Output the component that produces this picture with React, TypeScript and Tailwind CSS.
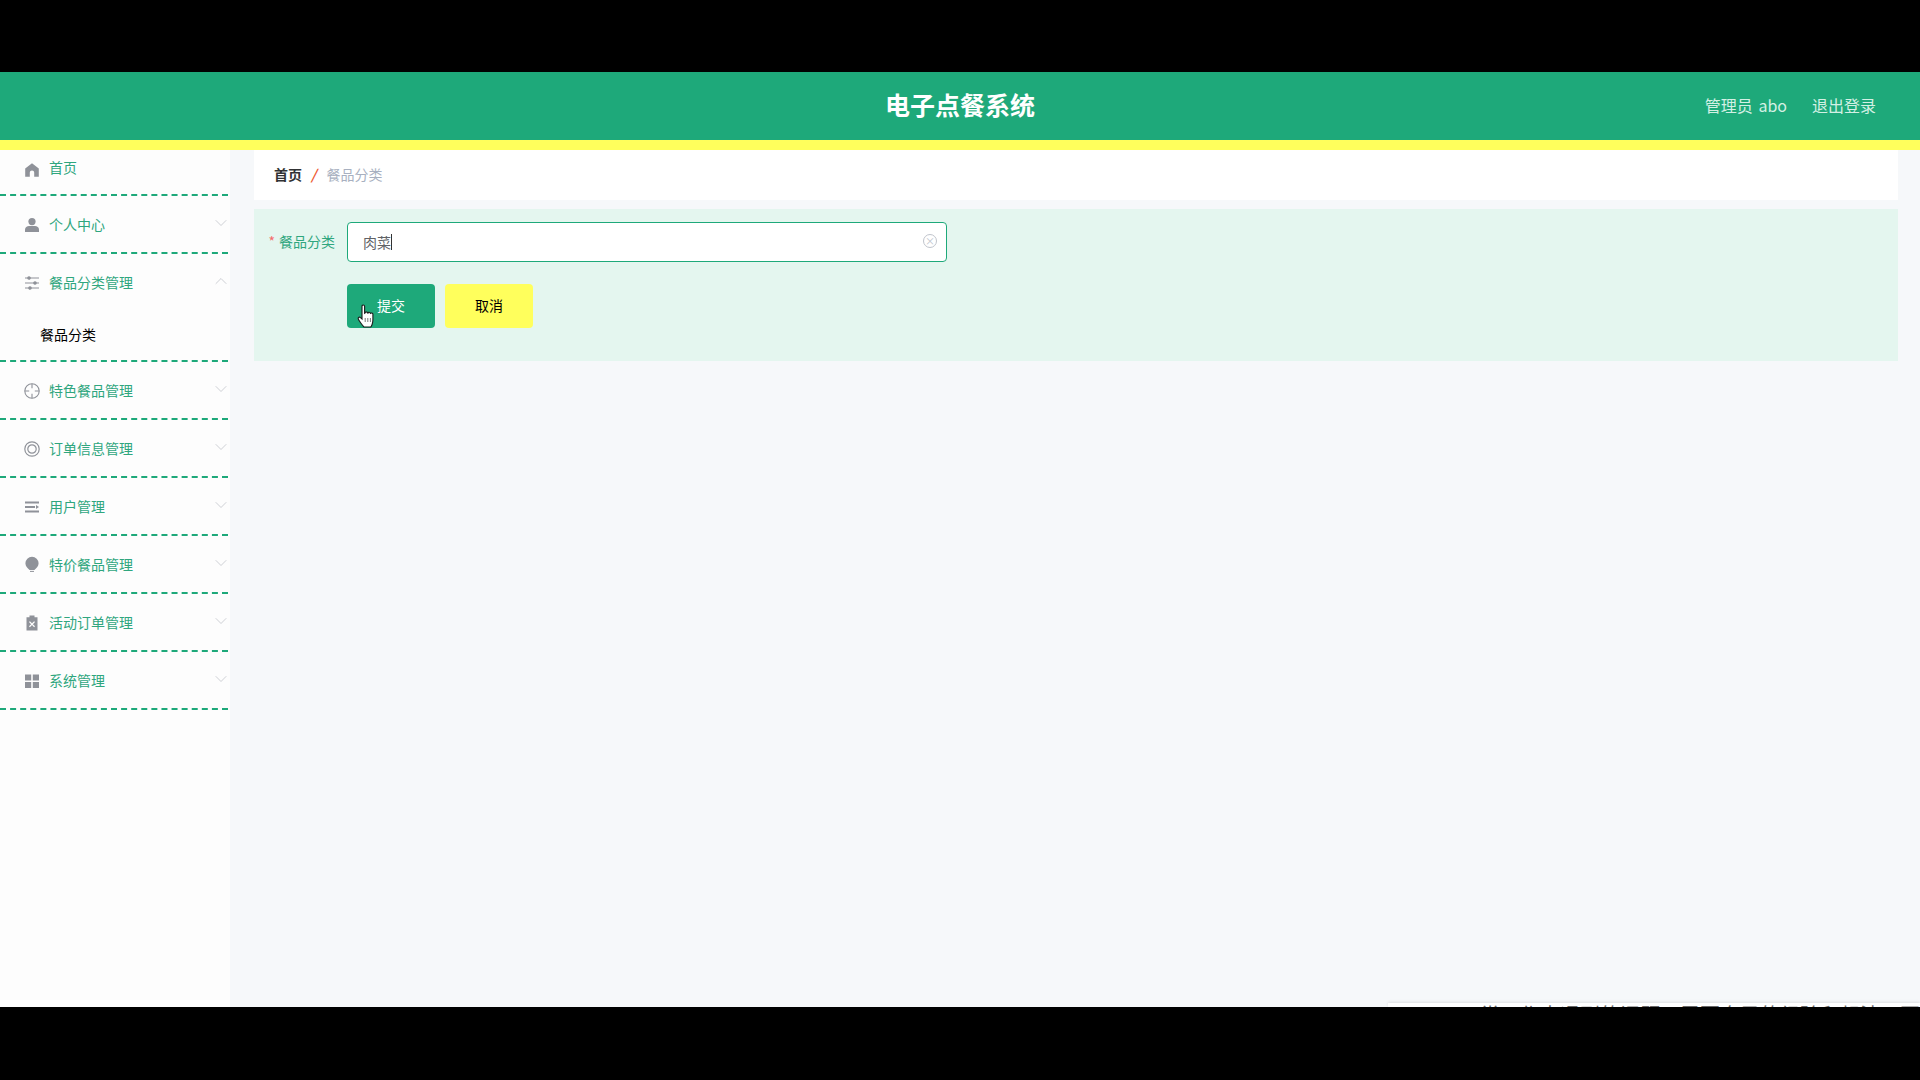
import React from 'react';
import { ChevronDown, ChevronUp } from 'lucide-react';

const FONT = "font-['Microsoft_YaHei','Noto_Sans_CJK_SC','Noto_Sans',sans-serif]";

const HomeIcon = () => (
  <svg viewBox="0 0 16 16" className="w-4 h-4 mt-[6px]" fill="#8f9299">
    <path d="M8 1.2 1.2 6.6v8.2h4.600v-4.200a2.200 2.200 0 0 1 4.400 0v4.200h4.600V6.600z" />
  </svg>
);
const UserIcon = () => (
  <svg viewBox="0 0 16 16" className="w-4 h-4 mt-px" fill="#8f9299">
    <circle cx="8" cy="4.600" r="3.600" />
    <path d="M1 15v-2.400C1 10.200 3 9 5 9h6c2 0 4 1.200 4 3.600V15z" />
  </svg>
);
const SlidersIcon = () => (
  <svg viewBox="0 0 16 16" className="w-4 h-4 mt-px" stroke="#8f9299" strokeWidth="1.2" fill="#8f9299">
    <path d="M1 3h14M1 8h14M1 13h14" />
    <circle cx="5" cy="3" r="1.200" />
    <circle cx="11" cy="8" r="1.200" />
    <circle cx="6" cy="13" r="1.200" />
  </svg>
);
const AimIcon = () => (
  <svg viewBox="0 0 16 16" className="w-4 h-4 mt-px" stroke="#8f9299" strokeWidth="1.100" fill="none">
    <circle cx="8" cy="8" r="7.200" />
    <path d="M8 .8v4.400M8 10.800v4.400M.8 8h4.400M10.800 8h4.400" />
  </svg>
);
const RingIcon = () => (
  <svg viewBox="0 0 16 16" className="w-4 h-4 mt-px" stroke="#8f9299" strokeWidth="1.200" fill="none">
    <circle cx="8" cy="8" r="7.200" />
    <circle cx="8" cy="8" r="4.200" />
  </svg>
);
const FoldIcon = () => (
  <svg viewBox="0 0 16 16" className="w-4 h-4 mt-px" fill="#8f9299">
    <path d="M1 2.400h14v2H1zM1 7h10v2H1zM1 11.600h14v2H1z" />
    <path d="M12 6l3 2-3 2z" />
  </svg>
);
const BulbIcon = () => (
  <svg viewBox="0 0 16 16" className="w-4 h-[17px] mt-px" fill="#8f9299">
    <path d="M8 .2a6.600 6.600 0 0 1 6.600 6.600c0 3-2 5-4.200 6.600H5.600C3.400 11.800 1.400 9.800 1.400 6.800A6.600 6.600 0 0 1 8 .2z" />
    <path d="M6 14.400h4v1H6z" />
  </svg>
);
const ClipboardIcon = () => (
  <svg viewBox="0 0 16 16" className="w-4 h-4 mt-px" fill="#8f9299">
    <path d="M5.500.6h5v1.600h3v13.400h-11V2.200h3zM5.900 6.200l-.9.9L7.100 9.200 5 11.300l.9.9L8 10.100l2.100 2.100.9-.9-2.100-2.100L11 7.100l-.9-.9L8 8.300z" fillRule="evenodd" />
  </svg>
);
const GridIcon = () => (
  <svg viewBox="0 0 16 16" className="w-4 h-4 mt-px" fill="#8f9299">
    <path d="M1 1.400h6.200v6H1zM8.800 1.400H15v6H8.800zM1 9h6.200v6H1zM8.800 9H15v6H8.800z" />
  </svg>
);

const HandCursor = () => (
  <svg viewBox="0 0 18 24" className="w-[18px] h-6">
    <path
      d="M5 2.200c0-1.600 2.600-1.600 2.600 0v7l.5-.3c0-1.400 2.300-1.400 2.400 0l.4.2c.2-1.300 2.300-1.200 2.400.2l.3.2c.4-.9 2.200-.7 2.300.6v6c0 3-1.400 6.400-2.200 6.900H7c-1-.8-5.600-7-5.800-8.400-.2-1.300 1.400-2 2.300-1L5 15z"
      fill="#fff"
      stroke="#1b1b1b"
      strokeWidth="1.100"
    />
    <path d="M8.200 14v4M10.800 14v4M13.400 14v4" stroke="#555" strokeWidth=".8" />
  </svg>
);

const MenuRow = ({ icon, label, open, first }: { icon: React.ReactNode; label: string; open?: boolean; first?: boolean }) => (
  <div className={`relative flex items-center ${first ? 'h-[44px] pb-[11px]' : 'h-[56px]'} pl-6 text-sm text-[#2fa67e]`}>
    <span className="w-4 h-4 flex items-center justify-center mr-[9px]">{icon}</span>
    <span>{label}</span>
    {!first && (
      <span className="absolute -right-[3px] top-[17px] text-[#c4c7cd]">
        {open ? <ChevronUp className="w-5 h-5" strokeWidth={1} /> : <ChevronDown className="w-5 h-5" strokeWidth={1} />}
      </span>
    )}
  </div>
);

const Group = ({ children }: { children: React.ReactNode }) => (
  <div className="border-b-2 border-dashed border-[#1ea97a]">{children}</div>
);

const menus = [
  { icon: <AimIcon />, label: '特色餐品管理' },
  { icon: <RingIcon />, label: '订单信息管理' },
  { icon: <FoldIcon />, label: '用户管理' },
  { icon: <BulbIcon />, label: '特价餐品管理' },
  { icon: <ClipboardIcon />, label: '活动订单管理' },
  { icon: <GridIcon />, label: '系统管理' },
];

const App: React.FC = () => {
  return (
    <div className={`relative w-[1920px] h-[1080px] overflow-hidden bg-black flex flex-col pt-[72px] pb-[73px] ${FONT}`}>
      {/* header */}
      <header className="h-[68px] shrink-0 pb-[2px] bg-[#1ea97a] grid grid-cols-[1fr_auto_1fr] items-center text-white">
        <div />
        <div className="text-[25px] font-bold">电子点餐系统</div>
        <div className="flex justify-end gap-[25px] pr-[44px] text-base text-[#d3f0e4]">
          <span className="[word-spacing:2px]">管理员 abo</span>
          <span>退出登录</span>
        </div>
      </header>
      <div className="h-[10px] shrink-0 bg-[#ffff5c]" />

      <div className="flex flex-1 min-h-0 bg-[#f6f8fa]">
        {/* sidebar */}
        <aside className="w-[230px] shrink-0 pr-[2px] bg-[#fdfdfd]">
          <Group>
            <MenuRow first icon={<HomeIcon />} label="首页" />
          </Group>
          <Group>
            <MenuRow icon={<UserIcon />} label="个人中心" />
          </Group>
          <Group>
            <MenuRow open icon={<SlidersIcon />} label="餐品分类管理" />
            <div className="h-[50px] pb-[3px] pl-10 flex items-center text-sm text-black">餐品分类</div>
          </Group>
          {menus.map((m) => (
            <Group key={m.label}>
              <MenuRow icon={m.icon} label={m.label} />
            </Group>
          ))}
        </aside>

        {/* main */}
        <main className="flex-1 pl-6 pr-[22px]">
          <div className="h-[50px] pb-[2px] bg-white flex items-center pl-5 text-sm">
            <span className="font-semibold text-[#303133]">首页</span>
            <span className="ml-[9px] mr-[10px] font-bold italic text-[#ee5a33]">/</span>
            <span className="text-[#a8b0c0]">餐品分类</span>
          </div>

          <form className="mt-[9px] h-[152px] bg-[#e4f6ef] pt-[13px]">
            <div className="flex items-center h-10">
              <label className="w-[93px] pr-3 pb-[2px] text-right text-sm text-[#2fa67e]">
                <span className="text-[#f56c6c] mr-1">*</span>餐品分类
              </label>
              <div className="relative w-[600px] h-10 bg-white rounded border border-[#1ea97a] flex items-center pl-[15px] text-sm text-[#606266]">
                <span>肉菜</span>
                <span className="w-px h-4 bg-[#333]" />
                <span className="absolute right-[9px] top-[11px] w-[14px] h-[14px] rounded-full border border-[#c0c4cc] flex items-center justify-center text-[10px] leading-none text-[#c0c4cc]">
                  ×
                </span>
              </div>
            </div>
            <div className="flex gap-[10px] mt-[22px] ml-[93px]">
              <button type="button" className="relative w-[88px] h-11 pb-[2px] rounded bg-[#1ea97a] text-white text-sm">
                提交
                <span className="absolute left-[10px] top-[20px]">
                  <HandCursor />
                </span>
              </button>
              <button type="button" className="w-[88px] h-11 pb-[2px] rounded bg-[#ffff5c] text-black text-sm">
                取消
              </button>
            </div>
          </form>
        </main>
      </div>

      {/* clipped subtitle strip at the bottom edge */}
      <div className="absolute left-[1388px] right-0 top-[1003px] h-[4px] overflow-hidden bg-white shadow-[0_-1px_3px_rgba(0,0,0,0.1)]">
        <div className="pl-[72px] text-[20px] leading-[24px] whitespace-nowrap text-[#666]">
          日常工作中遇到的问题，需要自己的经验和想法，再去一步步地分析处理这些问题
        </div>
      </div>
    </div>
  );
};

export default App;
